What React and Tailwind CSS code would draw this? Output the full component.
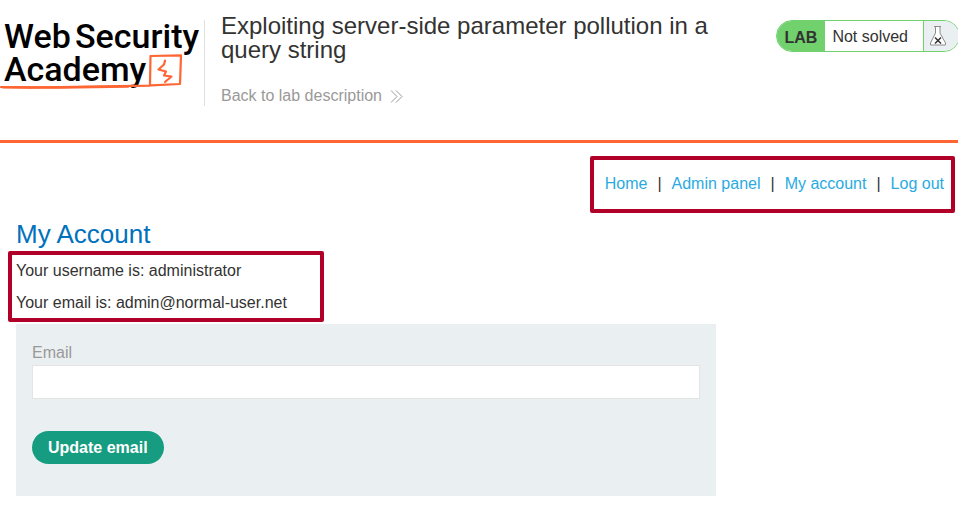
function Logo() {
  return (
    <svg viewBox="0 0 204 86" className="block h-[86px] w-[204px] overflow-visible" role="img" aria-label="Web Security Academy">
      <g fill="#000" className="font-['Roboto',sans-serif] text-[34px] font-medium">
        <text x="4" y="28">Web</text>
        <text x="75" y="28">Security</text>
        <text x="4" y="61">Academy</text>
      </g>
      <g fill="none" stroke="#ff6633" strokeLinejoin="round" strokeLinecap="round">
        <path d="M1 67 L30 67.6 L90 66.6 L150 65.6 L150.500 36 L181 35.400 L180 64 L151 65.400" strokeWidth="2.200" />
        <path d="M3 67.300 L60 67.500 L128 66.500" strokeWidth="2.400" />
        <path d="M165 40.500 L164 44.500 L158.500 49.500 L166 51.500 L164 55.500 L171.500 56.500 L165 62" strokeWidth="2.200" />
      </g>
    </svg>
  );
}

function Flask() {
  return (
    <svg viewBox="0 0 18 22" className="h-[22px] w-[18px]" fill="none" aria-hidden="true">
      <path d="M5 1.500H12M6.500 1.500V8L1.500 18V20H16.500V18L11 8V1.500" fill="#fff" stroke="#8c8c8c" />
      <path d="M6 12.500L12 18.500M12 12.500L6 18.500" stroke="#333" strokeWidth="1.500" />
    </svg>
  );
}

function Chevrons() {
  return (
    <svg viewBox="0 0 13 13" className="h-[13px] w-[13px]" fill="none" stroke="#999" aria-hidden="true">
      <path d="M1 0.500L7 6.500L1 12.500M6 0.500L12 6.500L6 12.500" />
    </svg>
  );
}

const links = ["Home", "Admin panel", "My account", "Log out"];

export default function App() {
  return (
    <div className="overflow-hidden bg-white font-['Liberation_Sans',Arial,sans-serif] text-base text-[#333332]">
      <header className="flex items-start border-b-[3px] border-[#ff6633] pt-5 pb-8">
        <a href="#academy" className="shrink-0 border-r border-[#e0e0e0]">
          <Logo />
        </a>
        <div className="min-w-0 flex-1 pl-4">
          <h1 className="-mt-1.5 max-w-[500px] text-2xl leading-6">
            Exploiting server-side parameter pollution in a query string
          </h1>
          <a href="#description" className="mt-[22px] flex w-fit items-center gap-2 leading-6 text-[#999]">
            Back to lab description
            <Chevrons />
          </a>
        </div>
        <div className="-mr-0.5 flex h-8 shrink-0 overflow-hidden rounded-full border border-[#70d16d] bg-white">
          <span className="flex items-center bg-[#70d16d] px-2 pt-1 font-bold">LAB</span>
          <span className="flex items-center pt-0.5 pr-[15px] pl-[7px]">Not solved</span>
          <span className="flex items-center border-l border-[#70d16d] bg-[#eaeff2] pr-3 pl-[5px]">
            <Flask />
          </span>
        </div>
      </header>

      <main className="pl-4">
        <nav className="mt-[13px] mr-[3px] ml-auto flex h-[57px] w-fit items-center rounded-xs border-4 border-[#b00027] pr-[7px] pb-0.5 pl-[11px]">
          {links.map((label, i) => (
            <span key={label}>
              {i > 0 && <span className="px-[10px]">|</span>}
              <a href={"#" + label} className="text-[#29abe2]">{label}</a>
            </span>
          ))}
        </nav>

        <h2 className="mt-[5px] pb-px text-[26px] leading-8 text-[#0071bc]">My Account</h2>
        <div className="-ml-2 h-[71px] w-[316px] rounded-xs border-4 border-[#b00027] pl-1 leading-8">
          <p>Your username is: administrator</p>
          <p>Your email is: admin@normal-user.net</p>
        </div>

        <form className="mt-0.5 max-w-[700px] bg-[#eaeff2] px-4 pt-4 pb-8" onSubmit={(e) => e.preventDefault()}>
          <label htmlFor="email" className="block leading-[25px] text-[#999]">Email</label>
          <input id="email" type="email" className="block h-[34px] w-full border border-[#e4e4e4] bg-white px-2 outline-none" />
          <button type="submit" className="mt-8 block h-[33px] rounded-full bg-[#169c80] px-4 font-bold text-white">
            Update email
          </button>
        </form>
      </main>
    </div>
  );
}
